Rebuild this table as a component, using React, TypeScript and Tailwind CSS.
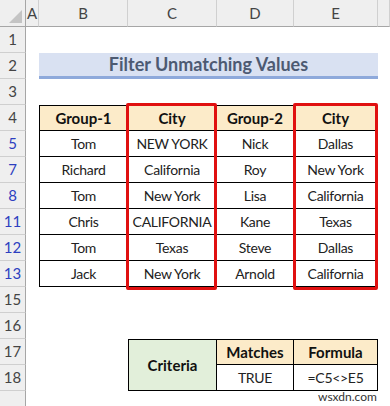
import React from 'react';

const font = { fontFamily: 'Lato, "Open Sans", sans-serif' };

const data = [
  ['5', 'Tom', 'NEW YORK', 'Nick', 'Dallas'],
  ['7', 'Richard', 'California', 'Roy', 'New York'],
  ['8', 'Tom', 'New York', 'Lisa', 'California'],
  ['11', 'Chris', 'CALIFORNIA', 'Kane', 'Texas'],
  ['12', 'Tom', 'Texas', 'Steve', 'Dallas'],
  ['13', 'Jack', 'New York', 'Arnold', 'California'],
];

const RowHead = ({ n, blue }: { n?: string; blue?: boolean }) => (
  <div
    className={`flex items-end justify-center pb-[2px] bg-[#efefef] border-r border-r-[#a6a6a6] border-b border-b-[#cfcfcf] text-[15px] ${
      blue ? 'text-[#2d3fc0]' : 'text-[#444]'
    }`}
  >
    {n}
  </div>
);

const Blank = () => <div />;

export default function App() {
  return (
    <div className="relative w-[390px] h-[406px] overflow-hidden bg-white text-[#111]" style={font}>
      <div className="grid grid-cols-[26px_13px_89px_89px_77px_84px_12px] grid-rows-[27px_repeat(14,26px)_15px]">
        {/* column headers */}
        <div className="relative bg-[#efefef] border-r border-r-[#a6a6a6] border-b border-b-[#a6a6a6]">
          <div className="absolute right-[3px] bottom-[3px] w-0 h-0 border-l-[13px] border-l-transparent border-b-[13px] border-b-[#c4c4c4]" />
        </div>
        {['A', 'B', 'C', 'D', 'E', ''].map((c, i) => (
          <div
            key={i}
            className="flex items-center justify-center bg-[#efefef] border-r border-r-[#d0d0d0] border-b border-b-[#a6a6a6] text-[15px] text-[#444]"
          >
            {c}
          </div>
        ))}

        {/* row 1 */}
        <RowHead n="1" />
        <Blank /><Blank /><Blank /><Blank /><Blank /><Blank />

        {/* row 2 title */}
        <RowHead n="2" />
        <Blank />
        <div className="col-span-4 flex items-center justify-center bg-[#d9e1f2] border-b-[3px] border-b-[#8ea9db] text-[18px] font-bold text-[#4d5a72]">
          Filter Unmatching Values
        </div>
        <Blank />

        {/* row 3 */}
        <RowHead n="3" />
        <Blank /><Blank /><Blank /><Blank /><Blank /><Blank />

        {/* row 4 header */}
        <RowHead n="4" />
        <Blank />
        {['Group-1', 'City', 'Group-2', 'City'].map((h, i) => (
          <div
            key={i}
            className={`flex items-center justify-center bg-[#fcebc9] border-t border-r border-b border-black text-[15px] font-bold ${
              i === 0 ? 'border-l' : ''
            }`}
          >
            {h}
          </div>
        ))}
        <Blank />

        {data.map((r) => (
          <React.Fragment key={r[0]}>
            <RowHead n={r[0]} blue />
            <Blank />
            {r.slice(1).map((v, i) => (
              <div
                key={i}
                className={`flex items-center justify-center border-r border-b border-black text-[14px] tracking-[-0.3px] text-[#222] ${
                  i === 0 ? 'border-l' : ''
                }`}
              >
                {v}
              </div>
            ))}
            <Blank />
          </React.Fragment>
        ))}

        {/* rows 15, 16 */}
        <RowHead n="15" />
        <Blank /><Blank /><Blank /><Blank /><Blank /><Blank />
        <RowHead n="16" />
        <Blank /><Blank /><Blank /><Blank /><Blank /><Blank />

        {/* row 17 */}
        <RowHead n="17" />
        <Blank />
        <Blank />
        <div className="row-span-2 flex items-center justify-center bg-[#e2efda] border border-black text-[15px] font-bold">
          Criteria
        </div>
        <div className="flex items-center justify-center bg-[#fcebc9] border-t border-r border-b border-black text-[15px] font-bold">
          Matches
        </div>
        <div className="flex items-center justify-center bg-[#fcebc9] border-t border-r border-b border-black text-[15px] font-bold">
          Formula
        </div>
        <Blank />

        {/* row 18 */}
        <RowHead n="18" />
        <Blank />
        <Blank />
        <div className="flex items-center justify-center border-r border-b border-black text-[14px] tracking-[-0.3px] text-[#222]">TRUE</div>
        <div className="flex items-center justify-center border-r border-b border-black text-[14px] tracking-[-0.3px] text-[#222]">=C5&lt;&gt;E5</div>
        <Blank />

        {/* partial row */}
        <div className="bg-[#efefef] border-r border-r-[#a6a6a6]" />
        <Blank /><Blank /><Blank /><Blank /><Blank /><Blank />
      </div>

      {/* red highlight boxes */}
      <div className="absolute left-[126px] top-[103px] w-[91px] h-[187px] border-[3px] border-[#e01010] rounded-[2px]" />
      <div className="absolute left-[293px] top-[103px] w-[85px] h-[187px] border-[3px] border-[#e01010] rounded-[2px]" />

      {/* watermark */}
      <div className="absolute left-[318px] top-[390px] text-[12px] leading-[14px] text-[#333]">wsxdn.com</div>
    </div>
  );
}
